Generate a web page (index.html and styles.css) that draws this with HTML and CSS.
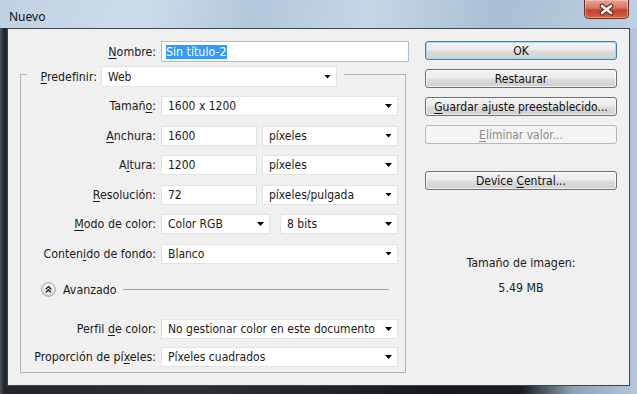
FILE: index.html
```html
<!DOCTYPE html>
<html lang="es">
<head>
  <meta charset="UTF-8">
  <title>Nuevo</title>
  <link rel="stylesheet" href="styles.css">
</head>
<body>
  <div class="window">
    <div class="titlebar">
      <span class="title">Nuevo</span>
      <button class="close" aria-label="Cerrar">
        <svg width="17" height="13" viewBox="0 0 17 13">
          <path d="M4 3 L13 10 M13 3 L4 10" stroke="#4a1d16" stroke-width="4.6" stroke-linecap="round"/>
          <path d="M4 3 L13 10 M13 3 L4 10" stroke="#fff" stroke-width="2.8" stroke-linecap="round"/>
        </svg>
      </button>
    </div>

    <div class="frame">
      <div class="client">
        <!-- left side: document settings -->
        <div class="form">
          <div class="name-row">
            <span class="label"><u>N</u>ombre:</span>
            <div class="input focus"><span class="selected">Sin título-2</span></div>
          </div>

          <fieldset class="group">
            <legend class="legend">
              <span class="legend-label"><u>P</u>redefinir:</span>
              <div class="select preset">Web</div>
            </legend>

            <div class="rows">
              <span class="label">Tamañ<u>o</u>:</span>
              <div class="select">1600 x 1200</div>

              <span class="label"><u>A</u>nchura:</span>
              <div class="pair">
                <div class="input num">1600</div>
                <div class="select unit">píxeles</div>
              </div>

              <span class="label">A<u>l</u>tura:</span>
              <div class="pair">
                <div class="input num">1200</div>
                <div class="select unit">píxeles</div>
              </div>

              <span class="label"><u>R</u>esolución:</span>
              <div class="pair">
                <div class="input num">72</div>
                <div class="select unit">píxeles/pulgada</div>
              </div>

              <span class="label"><u>M</u>odo de color:</span>
              <div class="pair wide-gap">
                <div class="select mode">Color RGB</div>
                <div class="select bits">8 bits</div>
              </div>

              <span class="label">Conten<u>i</u>do de fondo:</span>
              <div class="select">Blanco</div>
            </div>

            <div class="advanced">
              <svg class="toggle" width="15" height="15" viewBox="0 0 15 15">
                <defs>
                  <linearGradient id="knob" x1="0" y1="0" x2="0" y2="1">
                    <stop offset="0" stop-color="#ffffff"/>
                    <stop offset="1" stop-color="#d8d8d8"/>
                  </linearGradient>
                </defs>
                <circle cx="7.5" cy="7.5" r="6.8" fill="url(#knob)" stroke="#9c9c9c"/>
                <path d="M4.8 7.2 L7.5 4.6 L10.2 7.2 M4.8 10.4 L7.5 7.8 L10.2 10.4" fill="none" stroke="#111" stroke-width="1.3"/>
              </svg>
              <span class="label">Avanzado</span>
              <span class="rule"></span>
            </div>

            <div class="rows more">
              <span class="label">Perfil <u>d</u>e color:</span>
              <div class="select">No gestionar color en este documento</div>

              <span class="label">Proporción de pí<u>x</u>eles:</span>
              <div class="select">Píxeles cuadrados</div>
            </div>
          </fieldset>
        </div>

        <!-- right side: actions -->
        <div class="actions">
          <button class="btn default">OK</button>
          <button class="btn">Restaurar</button>
          <button class="btn"><u>G</u>uardar ajuste preestablecido...</button>
          <button class="btn" disabled><u>E</u>liminar valor...</button>
          <button class="btn spaced">Device <u>C</u>entral...</button>

          <div class="size-info">
            <p>Tamaño de imagen:</p>
            <p class="size-value">5.49 MB</p>
          </div>
        </div>
      </div>
    </div>
  </div>
</body>
</html>
```

FILE: styles.css
```css
* { box-sizing: border-box; }
body {
  margin: 0;
  width: 637px;
  height: 394px;
  overflow: hidden;
  font-family: "DejaVu Sans Condensed", "DejaVu Sans", sans-serif;
  font-size: 12px;
  color: #1a1a1a;
}
u { text-underline-offset: 2px; }

/* window chrome */
.window {
  height: 394px;
  display: flex;
  flex-direction: column;
  background: linear-gradient(to right, #4b5560 0, #22262a 4px, #2c3136 30%, #16181b 70%, #1c1f22 82%, #8ea2b7 90%, #b4c6d8 100%);
}
.titlebar {
  height: 28px;
  flex: none;
  display: flex;
  justify-content: space-between;
  align-items: flex-start;
  padding: 0 8px 0 9px;
  background: linear-gradient(100deg, #c0d1e3 0%, #cddcec 22%, #b3c7dc 40%, #c6d6e7 58%, #a9bed4 78%, #bdcfe1 100%);
}
.title {
  padding-top: 8px;
  font-family: "Noto Sans", "Open Sans", sans-serif;
  font-size: 12px;
  color: #111;
}
.close {
  width: 45px;
  height: 19px;
  padding: 0;
  display: flex;
  align-items: center;
  justify-content: center;
  border: 1px solid #6b2c22;
  border-top: none;
  border-radius: 0 0 5px 5px;
  background: linear-gradient(#e9a596 0%, #d87460 45%, #c2432b 55%, #d0633f 100%);
  box-shadow: inset 0 0 0 1px rgba(255, 210, 200, 0.5);
}
.frame {
  flex: 1;
  padding: 0 7px 8px;
}
.client {
  height: 100%;
  display: flex;
  padding: 12px 0 0 12px;
  border: 1px solid #3b434c;
  background: #f0f0f0;
}

/* form */
.form { width: 386px; flex: none; }
.label { text-align: right; white-space: nowrap; font-size: 12.3px; }
.name-row { display: flex; align-items: center; height: 21px; }
.name-row .label { width: 136px; margin-right: 5px; flex: none; }
.input {
  height: 20px;
  display: flex;
  align-items: center;
  padding-left: 6px;
  background: #fff;
  border: 1px solid #e2e2e2;
}
.input.focus {
  width: 248px;
  flex: none;
  height: 21px;
  padding-left: 4px;
  border-color: #9ec2e6;
}
.selected {
  background: #3399ff;
  color: #fff;
  line-height: 14px;
  padding-right: 1px;
  font-size: 12.3px;
}

.group {
  margin: 0;
  padding: 9px 7px 5px 0;
  min-width: 0;
  border: 1px solid #b3b3b3;
}
.legend {
  display: flex;
  align-items: center;
  margin-left: 6px;
  padding: 4px 7px 0 0;
}
.legend-label { width: 70px; margin-right: 4px; text-align: right; font-size: 12.3px; }

.select {
  height: 20px;
  display: flex;
  align-items: center;
  padding: 0 5px 0 6px;
  background: #fff;
  border: 1px solid #e2e2e2;
  white-space: nowrap;
}
.select::after {
  content: "";
  width: 7px;
  height: 4px;
  margin-left: auto;
  flex: none;
  background: #000;
  clip-path: polygon(0 0, 100% 0, 50% 100%);
}
.select.preset { width: 236px; height: 21px; }

.rows {
  display: grid;
  grid-template-columns: 135px 237px;
  grid-auto-rows: 20px;
  column-gap: 5px;
  row-gap: 9.5px;
  align-items: center;
}
.rows .select, .rows .pair { height: 20px; }
.rows.more { row-gap: 8px; }
.pair { display: flex; gap: 5px; }
.pair.wide-gap { gap: 10px; }
.input.num { width: 96px; }
.select.unit { flex: 1; }
.select.mode { width: 109px; }
.select.bits { flex: 1; }

.advanced {
  display: flex;
  align-items: center;
  height: 15px;
  margin: 18.5px 9px 22px 20px;
}
.toggle { flex: none; margin-right: 7px; }
.rule {
  flex: 1;
  height: 1px;
  margin-left: 6px;
  background: #a0a0a0;
}

/* buttons */
.actions {
  width: 192px;
  margin-left: 19px;
  display: flex;
  flex-direction: column;
  gap: 9px;
}
.btn {
  height: 19px;
  padding: 0;
  font: inherit;
  color: #111;
  border: 1px solid #707070;
  border-radius: 3px;
  background: linear-gradient(#f4f4f4 0%, #ebebeb 48%, #dddddd 52%, #cfcfcf 100%);
  box-shadow: inset 0 0 0 1px rgba(255, 255, 255, 0.7);
}
.btn.default {
  border-color: #3c7fb1;
  box-shadow: inset 0 0 0 1px #a9dcf4;
}
.btn:disabled {
  color: #8a8a8a;
  border-color: #b5b8ba;
  background: #f4f4f4;
  box-shadow: none;
}
.btn.spaced { margin-top: 18px; }

.size-info {
  margin-top: 56px;
  text-align: center;
  line-height: 16px;
  font-size: 12.3px;
}
.size-info p { margin: 0; }
.size-info .size-value { margin-top: 9px; }
```
